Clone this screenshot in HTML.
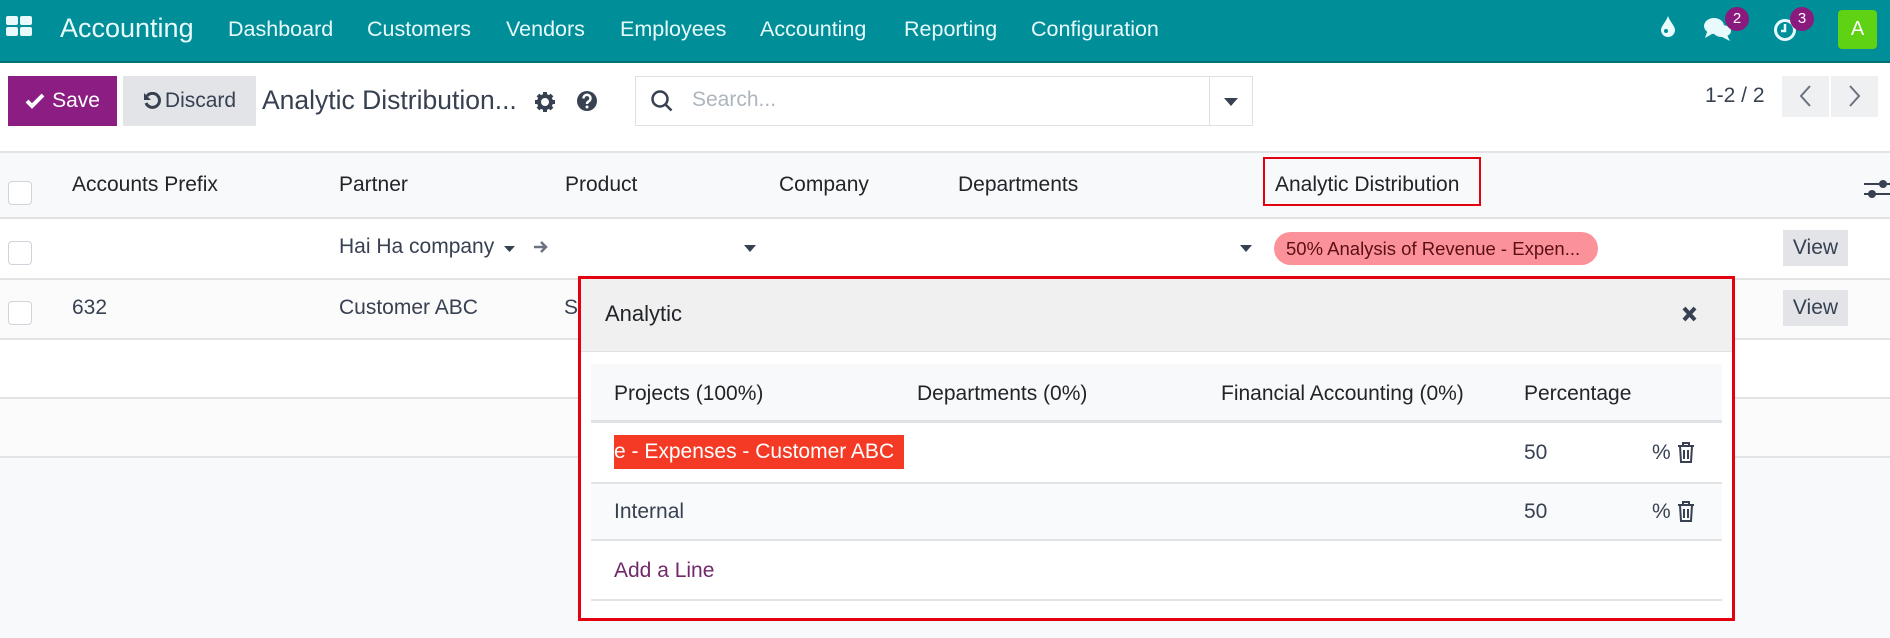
<!DOCTYPE html>
<html><head><meta charset="utf-8"><style>
*{box-sizing:border-box;margin:0;padding:0}
body{width:1890px;height:638px;overflow:hidden;background:#f8f9fa;font-family:"Liberation Sans",Roboto,sans-serif;color:#212529;font-size:21px;position:relative}
.a{position:absolute;white-space:nowrap}
.nav{position:absolute;left:0;top:0;width:1890px;height:63px;background:#008f99;border-bottom:2px solid #00707a}
.nav .a{color:#e8fafb;font-size:21.5px;top:17px}
.cp{position:absolute;left:0;top:63px;width:1890px;height:89px;background:#fff}
.btn{position:absolute;font-size:21px;display:flex;align-items:center;justify-content:center}
.row{position:absolute;left:0;width:1890px;border-bottom:2px solid #e2e3e5}
.cb{position:absolute;left:8px;width:24px;height:24px;border:1px solid #ced4da;border-radius:4px;background:#fff}
.view{position:absolute;left:1783px;width:65px;height:36px;background:#e2e4e8;font-size:21px;text-align:center;line-height:36px;color:#374151}
</style></head><body>
<div class="nav">
<svg class="a" style="left:6px;top:16px" width="27" height="21" viewBox="0 0 27 21"><rect x="0" y="0" width="12" height="9" rx="2" fill="#e8fafb"/><rect x="14" y="0" width="12" height="9" rx="2" fill="#e8fafb"/><rect x="0" y="11" width="12" height="9" rx="2" fill="#e8fafb"/><rect x="14" y="11" width="12" height="9" rx="2" fill="#e8fafb"/></svg>
<div class="a" style="left:60px;top:13px;font-size:27px">Accounting</div>
<div class="a" style="left:228px">Dashboard</div>
<div class="a" style="left:367px">Customers</div>
<div class="a" style="left:506px">Vendors</div>
<div class="a" style="left:620px">Employees</div>
<div class="a" style="left:760px">Accounting</div>
<div class="a" style="left:904px">Reporting</div>
<div class="a" style="left:1031px">Configuration</div>
<svg class="a" style="left:1660px;top:16px" width="16" height="22" viewBox="0 0 16 22"><path d="M8 0C6 6 1 10 1 14a7 7 0 0 0 14 0C15 10 10 6 8 0z" fill="#e8fafb"/><circle cx="6" cy="15" r="2" fill="#008f99"/></svg>
<svg class="a" style="left:1703px;top:16px" width="30" height="26" viewBox="0 0 30 26"><ellipse cx="11" cy="10" rx="10" ry="8" fill="#e8fafb"/><path d="M4 16l-2 6 7-4z" fill="#e8fafb"/><ellipse cx="19" cy="15" rx="9" ry="6" fill="#e8fafb"/><path d="M24 19l3 6-8-4z" fill="#e8fafb"/></svg>
<div class="a" style="left:1725px;top:7px;width:24px;height:24px;border-radius:12px;background:#8a1a7e;color:#fff;font-size:15px;text-align:center;line-height:24px">2</div>
<svg class="a" style="left:1773px;top:18px" width="24" height="24" viewBox="0 0 24 24"><circle cx="12" cy="12" r="9.5" fill="none" stroke="#e8fafb" stroke-width="3"/><path d="M12 6v7h-4" fill="none" stroke="#e8fafb" stroke-width="2.5"/></svg>
<div class="a" style="left:1790px;top:7px;width:24px;height:24px;border-radius:12px;background:#8a1a7e;color:#fff;font-size:15px;text-align:center;line-height:24px">3</div>
<div class="a" style="left:1838px;top:10px;width:39px;height:39px;border-radius:4px;background:#5fd313;color:#fff;font-size:20px;text-align:center;line-height:39px">A</div>
</div>
<div class="cp">
<div class="btn" style="left:8px;top:13px;width:109px;height:50px;background:#8b1d83;color:#fff"><svg width="20" height="16" viewBox="0 0 20 16" style="margin-right:7px"><path d="M2 8l5 5L18 2" fill="none" stroke="#fff" stroke-width="4"/></svg>Save</div>
<div class="btn" style="left:123px;top:13px;width:133px;height:50px;background:#e2e4e8;color:#374151"><svg width="18" height="18" viewBox="0 0 18 18" style="margin-right:4px"><path d="M4 4a7 7 0 1 1-1 7" fill="none" stroke="#374151" stroke-width="3"/><path d="M1 1v7h7z" fill="#374151"/></svg>Discard</div>
<div class="a" style="left:262px;top:22px;font-size:26.5px;color:#374151">Analytic Distribution...</div>
<svg class="a" style="left:535px;top:29px" width="20" height="20" viewBox="0 0 20 20"><circle cx="10" cy="10" r="6" fill="none" stroke="#374151" stroke-width="4"/><g stroke="#374151" stroke-width="4"><path d="M10 0v5M10 15v5M0 10h5M15 10h5M3 3l3 3M14 14l3 3M3 17l3-3M14 6l3-3"/></g></svg>
<svg class="a" style="left:577px;top:28px" width="20" height="20" viewBox="0 0 20 20"><circle cx="10" cy="10" r="10" fill="#374151"/><path d="M6.5 7.5a3.5 3.5 0 1 1 5 3c-1.2.6-1.5 1.2-1.5 2.5" fill="none" stroke="#fff" stroke-width="2.5"/><circle cx="10" cy="16" r="1.5" fill="#fff"/></svg>
<div class="a" style="left:635px;top:13px;width:618px;height:50px;border:1px solid #dee2e6;background:#fff"></div>
<div class="a" style="left:1209px;top:13px;width:1px;height:50px;background:#dee2e6"></div>
<svg class="a" style="left:650px;top:26px" width="24" height="24" viewBox="0 0 24 24"><circle cx="10" cy="10" r="7.5" fill="none" stroke="#374151" stroke-width="2.5"/><path d="M15.5 15.5l6 6" stroke="#374151" stroke-width="2.5"/></svg>
<div class="a" style="left:692px;top:25px;font-size:21px;color:#adb5bd">Search...</div>
<svg class="a" style="left:1224px;top:35px" width="14" height="8"><path d="M0 0h14L7 8z" fill="#374151"/></svg>
<div class="a" style="left:1705px;top:21px;font-size:21px;color:#374151">1-2 / 2</div>
<div class="a" style="left:1782px;top:13px;width:47px;height:41px;background:#eef0f2"></div>
<div class="a" style="left:1831px;top:13px;width:47px;height:41px;background:#eef0f2"></div>
<svg class="a" style="left:1798px;top:21px" width="14" height="24"><path d="M12 2L3 12l9 10" fill="none" stroke="#6b7280" stroke-width="2"/></svg>
<svg class="a" style="left:1848px;top:21px" width="14" height="24"><path d="M2 2l9 10-9 10" fill="none" stroke="#6b7280" stroke-width="2"/></svg>
</div>
<div class="row" style="top:151px;height:68px;background:#f8f9fa;border-top:2px solid #e2e3e5">
<div class="cb" style="top:28px"></div>
<div class="a" style="left:72px;top:20px">Accounts Prefix</div>
<div class="a" style="left:339px;top:20px">Partner</div>
<div class="a" style="left:565px;top:20px">Product</div>
<div class="a" style="left:779px;top:20px">Company</div>
<div class="a" style="left:958px;top:20px">Departments</div>
<div class="a" style="left:1263px;top:4px;width:218px;height:49px;border:2px solid #e3000f"></div>
<div class="a" style="left:1275px;top:20px">Analytic Distribution</div>
<svg class="a" style="left:1864px;top:25px" width="26" height="22"><path d="M0 6h26M0 16h26" stroke="#374151" stroke-width="2"/><circle cx="19" cy="6" r="4" fill="#374151"/><circle cx="8" cy="16" r="4" fill="#374151"/></svg>
</div>
<div class="row" style="top:219px;height:61px;background:#fff">
<div class="cb" style="top:22px"></div>
<div class="a" style="left:339px;top:16px;color:#374151">Hai Ha company</div>
<svg class="a" style="left:504px;top:27px" width="11" height="6"><path d="M0 0h11L5.5 6z" fill="#374151"/></svg>
<svg class="a" style="left:533px;top:20px" width="16" height="16"><path d="M1 8h12M8 3l5 5-5 5" fill="none" stroke="#6b7280" stroke-width="2.5"/></svg>
<svg class="a" style="left:744px;top:26px" width="12" height="7"><path d="M0 0h12L6 7z" fill="#374151"/></svg>
<svg class="a" style="left:1240px;top:26px" width="12" height="7"><path d="M0 0h12L6 7z" fill="#374151"/></svg>
<div class="a" style="left:1274px;top:13px;width:324px;height:33px;border-radius:17px;background:#fb9199;color:#5c0f14;font-size:18.5px;line-height:33px;padding-left:12px">50% Analysis of Revenue - Expen...</div>
<div class="view" style="top:11px">View</div>
</div>
<div class="row" style="top:280px;height:60px;background:#fbfbfb">
<div class="cb" style="top:21px"></div>
<div class="a" style="left:72px;top:16px;color:#374151">632</div>
<div class="a" style="left:339px;top:16px;color:#374151">Customer ABC</div>
<div class="a" style="left:564px;top:16px;color:#374151">S</div>
<div class="view" style="top:10px">View</div>
</div>
<div class="row" style="top:340px;height:59px;background:#fff"></div>
<div class="row" style="top:399px;height:59px;background:#fbfbfb"></div>

<div class="a" style="left:578px;top:276px;width:1157px;height:345px;border:3px solid #e3000f;background:#fff">
<div class="a" style="left:0;top:0;width:1151px;height:73px;background:#f0f0f0;border-bottom:1px solid #dee2e6"></div>
<div class="a" style="left:24px;top:22px;font-size:22px">Analytic</div>
<svg class="a" style="left:1101px;top:27px" width="15" height="16"><path d="M2 2l11 12M13 2L2 14" stroke="#374151" stroke-width="4"/></svg>
<div class="a" style="left:10px;top:85px;width:1131px;height:59px;background:#f8f9fa;border-bottom:3px solid #dee2e6"></div>
<div class="a" style="left:33px;top:103px">Projects (100%)</div>
<div class="a" style="left:336px;top:103px">Departments (0%)</div>
<div class="a" style="left:640px;top:103px">Financial Accounting (0%)</div>
<div class="a" style="left:943px;top:103px">Percentage</div>
<div class="a" style="left:10px;top:203px;width:1131px;height:59px;background:#f9fafb;border-top:2px solid #e2e3e5;border-bottom:2px solid #e2e3e5"></div>
<div class="a" style="left:10px;top:320px;width:1131px;height:2px;background:#e2e3e5"></div>
<div class="a" style="left:33px;top:156px;width:290px;height:34px;background:#f43a24;color:#fff;font-size:21px;line-height:34px;overflow:hidden">e - Expenses - Customer ABC</div>
<div class="a" style="left:943px;top:162px;color:#374151">50</div>
<div class="a" style="left:1071px;top:162px;color:#374151">%</div>
<svg class="a" style="left:1096px;top:163px" width="18" height="21" viewBox="0 0 18 21"><path d="M1 4h16M6 4V1h6v3M3 4l1 16h10l1-16M7 8v9M11 8v9" fill="none" stroke="#374151" stroke-width="2"/></svg>
<div class="a" style="left:33px;top:221px;color:#374151">Internal</div>
<div class="a" style="left:943px;top:221px;color:#374151">50</div>
<div class="a" style="left:1071px;top:221px;color:#374151">%</div>
<svg class="a" style="left:1096px;top:222px" width="18" height="21" viewBox="0 0 18 21"><path d="M1 4h16M6 4V1h6v3M3 4l1 16h10l1-16M7 8v9M11 8v9" fill="none" stroke="#374151" stroke-width="2"/></svg>
<div class="a" style="left:33px;top:280px;color:#71296b">Add a Line</div>
</div>
</body></html>
